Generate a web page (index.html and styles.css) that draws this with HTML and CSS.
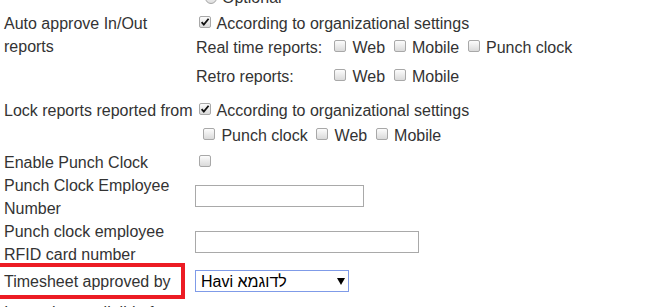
FILE: index.html
```html
<!DOCTYPE html>
<html>
<head>
<meta charset="utf-8">
<link rel="stylesheet" href="styles.css">
</head>
<body>
<div class="form">
  <div class="row row-optional">
    <div class="label"></div>
    <div class="value"><span class="radio"></span>Optional</div>
  </div>

  <div class="row row-auto">
    <div class="label">Auto approve In/Out reports</div>
    <div class="value">
      <div class="line"><input type="checkbox" class="cb" checked> According to organizational settings</div>
      <div class="sub sub-real">
        <div class="sublabel">Real time reports:</div>
        <div class="subvalue"><input type="checkbox" class="cb"> Web <input type="checkbox" class="cb"> Mobile <input type="checkbox" class="cb"> Punch clock</div>
      </div>
      <div class="sub sub-retro">
        <div class="sublabel">Retro reports:</div>
        <div class="subvalue"><input type="checkbox" class="cb"> Web <input type="checkbox" class="cb"> Mobile</div>
      </div>
    </div>
  </div>

  <div class="row row-lock">
    <div class="label">Lock reports reported from</div>
    <div class="value">
      <div class="line"><input type="checkbox" class="cb" checked> According to organizational settings</div>
      <div class="line line-indent"><input type="checkbox" class="cb"> Punch clock <input type="checkbox" class="cb"> Web <input type="checkbox" class="cb"> Mobile</div>
    </div>
  </div>

  <div class="row">
    <div class="label">Enable Punch Clock</div>
    <div class="value"><input type="checkbox" class="cb"></div>
  </div>

  <div class="row row-center">
    <div class="label">Punch Clock Employee Number</div>
    <div class="value"><input type="text" class="text text-short"></div>
  </div>

  <div class="row row-center">
    <div class="label">Punch clock employee RFID card number</div>
    <div class="value"><input type="text" class="text text-long"></div>
  </div>

  <div class="row row-center row-timesheet">
    <div class="label">Timesheet approved by<span class="highlight"></span></div>
    <div class="value">
      <select class="select"><option>Havi לדוגמא</option></select>
    </div>
  </div>

  <div class="row">
    <div class="label">Is employee eligible for overtime</div>
    <div class="value"></div>
  </div>
</div>
</body>
</html>
```

FILE: styles.css
```css
html, body {
  margin: 0;
  padding: 0;
  background: #ffffff;
  overflow: hidden;
}

body {
  font-family: "Liberation Sans", Arial, sans-serif;
  font-size: 16px;
  line-height: 23px;
  color: #333333;
}

.form {
  margin-top: -14px;
  display: flex;
  flex-direction: column;
}

.row {
  display: flex;
  align-items: flex-start;
}

.row-center {
  align-items: center;
}

.label {
  width: 195px;
  flex: none;
  padding-left: 4px;
  box-sizing: border-box;
  position: relative;
}

.value {
  flex: 1;
}

.row-optional {
  padding-bottom: 2.5px;
}

.row-optional .value {
  display: flex;
  align-items: center;
}

.radio {
  width: 12px;
  height: 12px;
  border: 1px solid #a6a6a6;
  border-radius: 50%;
  box-sizing: border-box;
  background: linear-gradient(#fdfdfd, #dedede);
  margin-left: 10px;
  margin-right: 5px;
}

.row-auto {
  padding-bottom: 9px;
}

.sub {
  display: flex;
  line-height: 26px;
}

.sub-retro {
  margin-top: 3px;
}

.sublabel {
  width: 135px;
  flex: none;
  padding-left: 1px;
  box-sizing: border-box;
}

.row-lock {
  padding-bottom: 4px;
}

.line-indent {
  margin-top: 2px;
  padding-left: 4px;
}

.cb {
  -webkit-appearance: none;
  appearance: none;
  width: 12px;
  height: 12px;
  margin: 0 2px 1px 4px;
  border: 1px solid #a8a8a8;
  border-radius: 2px;
  box-sizing: border-box;
  background: linear-gradient(#fcfcfc, #dadada);
  vertical-align: baseline;
}

.cb:checked {
  background-image: url("data:image/svg+xml,%3Csvg xmlns='http://www.w3.org/2000/svg' viewBox='0 0 10 10'%3E%3Cpath d='M1.6 5.2 L3.8 7.6 L8.6 1.8' fill='none' stroke='%23111' stroke-width='1.8'/%3E%3C/svg%3E"), linear-gradient(#fcfcfc, #dadada);
  background-size: 10px 10px, 100% 100%;
  background-position: center, center;
  background-repeat: no-repeat;
}

.text {
  height: 22px;
  margin: 0;
  border: 1px solid #a9a9a9;
  box-sizing: border-box;
  display: block;
  margin-top: -1.5px;
}

.text-short {
  width: 169px;
}

.text-long {
  width: 224px;
}

.row-timesheet {
  padding-top: 4px;
  padding-bottom: 8px;
}

.highlight {
  position: absolute;
  left: -4px;
  top: -6.5px;
  width: 189px;
  height: 36px;
  border: 4px solid #ec1c24;
  box-sizing: border-box;
}

.select {
  -webkit-appearance: none;
  appearance: none;
  width: 154px;
  height: 22px;
  margin: 0;
  display: block;
  border: 1px solid #7f9be8;
  border-radius: 0;
  box-sizing: border-box;
  padding: 0 0 0 5px;
  font-family: "Liberation Sans", Arial, sans-serif;
  font-size: 16px;
  color: #000000;
  background-color: #ffffff;
  background-image: url("data:image/svg+xml,%3Csvg xmlns='http://www.w3.org/2000/svg' viewBox='0 0 8 7'%3E%3Cpath d='M0 0 H8 L4 7 Z' fill='%23000'/%3E%3C/svg%3E");
  background-size: 8px 7px;
  background-position: 141px center;
  background-repeat: no-repeat;
}
```
